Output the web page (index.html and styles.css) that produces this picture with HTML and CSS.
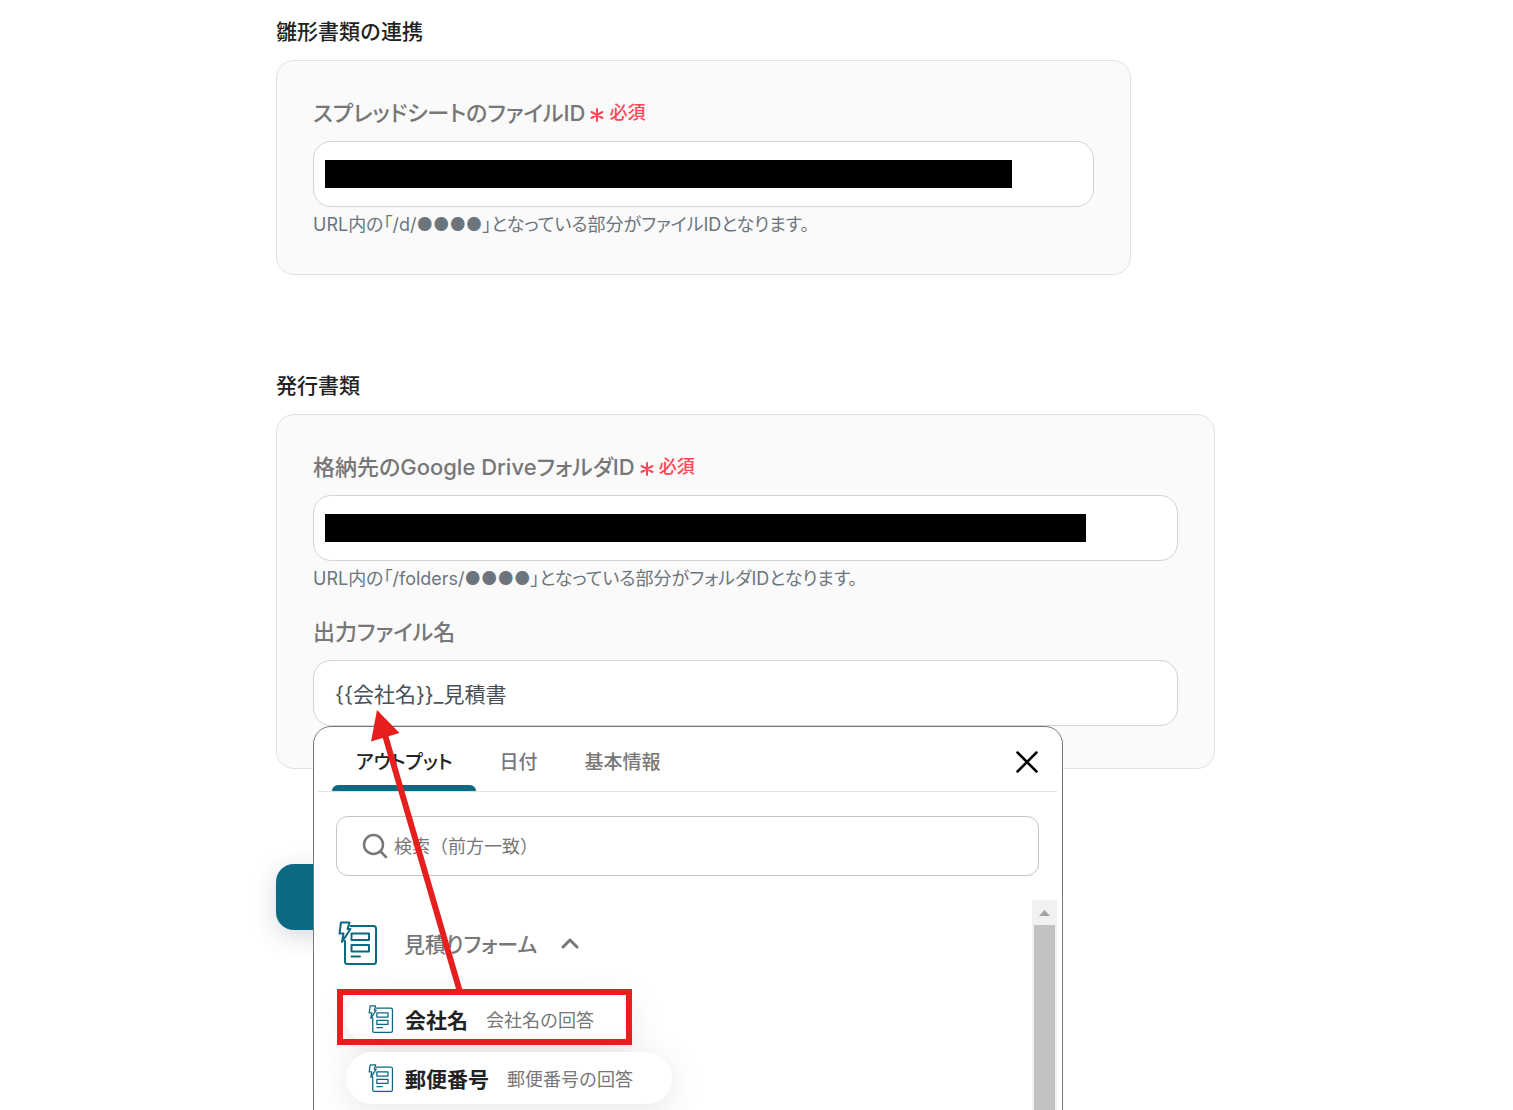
FILE: index.html
```html
<!DOCTYPE html>
<html lang="ja">
<head>
    <meta charset="UTF-8" />
    <meta name="viewport" content="width=device-width, initial-scale=1.0"/>
    <title>書類発行の設定</title>
    <link rel="stylesheet" href="styles.css">
</head>
<body>
    <!-- フォームアイコンの共通定義 -->
    <svg class="defs" aria-hidden="true">
        <symbol id="formIcon" viewBox="0 0 40 44">
            <path d="M12.500 5H35.500Q38 5 38 7.500V40.500Q38 43 35.500 43H9.500Q7 43 7 40.500V20" />
            <path d="M3 1.500H11.500L9.500 8H12.500L4 21L5.500 12.500H1.500Z" />
            <path d="M13.500 12.500H31V19H13.500ZM13.500 24H31V30.500H13.500ZM13.500 35.500H22" />
        </symbol>
    </svg>

    <form class="page" id="documentForm">
        <section class="section">
            <h2>雛形書類の連携</h2>
            <div class="card card-narrow">
                <div class="label-row">
                    <label for="sheetId">スプレッドシートのファイルID</label>
                    <span class="required"><svg viewBox="0 0 14 14"><path d="M7 1V13M1.500 4L12.500 10M1.500 10L12.500 4" /></svg>必須</span>
                </div>
                <div class="field">
                    <input type="text" id="sheetId" required>
                    <span class="mask"></span>
                </div>
                <p class="hint">URL内の「/d/●●●●」となっている部分がファイルIDとなります。</p>
            </div>
        </section>

        <section class="section">
            <h2>発行書類</h2>
            <div class="card card-tall">
                <div class="label-row">
                    <label for="folderId">格納先のGoogle DriveフォルダID</label>
                    <span class="required"><svg viewBox="0 0 14 14"><path d="M7 1V13M1.500 4L12.500 10M1.500 10L12.500 4" /></svg>必須</span>
                </div>
                <div class="field">
                    <input type="text" id="folderId" required>
                    <span class="mask"></span>
                </div>
                <p class="hint">URL内の「/folders/●●●●」となっている部分がフォルダIDとなります。</p>

                <div class="label-row label-next">
                    <label for="fileName">出力ファイル名</label>
                </div>
                <div class="field">
                    <input type="text" id="fileName" value="{{会社名}}_見積書">

                    <!-- 変数の選択メニュー -->
                    <div class="picker">
                        <div class="tabs">
                            <button type="button" class="tab active">アウトプット</button>
                            <button type="button" class="tab">日付</button>
                            <button type="button" class="tab">基本情報</button>
                            <button type="button" class="close" aria-label="閉じる">
                                <svg viewBox="0 0 24 24"><path d="M2.500 2.500L21.500 21.500M21.500 2.500L2.500 21.500" /></svg>
                            </button>
                        </div>
                        <div class="search">
                            <svg viewBox="0 0 26 26"><circle cx="11.500" cy="11.500" r="9.500" /><path d="M18.500 18.500L24 24" /></svg>
                            <input type="search" placeholder="検索（前方一致）" aria-label="検索">
                        </div>
                        <div class="results">
                            <div class="list">
                                <button type="button" class="group">
                                    <svg class="form-icon"><use href="#formIcon" /></svg>
                                    見積りフォーム
                                    <svg class="chevron" viewBox="0 0 18 12"><path d="M2 10L9 3L16 10" /></svg>
                                </button>
                                <button type="button" class="item">
                                    <svg class="form-icon"><use href="#formIcon" /></svg>
                                    <b>会社名</b><span>会社名の回答</span>
                                </button>
                                <button type="button" class="item">
                                    <svg class="form-icon"><use href="#formIcon" /></svg>
                                    <b>郵便番号</b><span>郵便番号の回答</span>
                                </button>
                            </div>
                            <div class="scrollbar">
                                <svg viewBox="0 0 25 25"><path d="M7 16L12.500 10L18 16Z" /></svg>
                                <div class="thumb"></div>
                            </div>
                        </div>
                    </div>

                    <!-- 説明用の矢印と赤枠 -->
                    <svg class="guide" viewBox="0 0 330 400" aria-hidden="true">
                        <path class="guide-line" d="M72 75L147 332" />
                        <path class="guide-head" d="M64 50L86.500 73L58 81.500Z" />
                        <rect class="guide-line" x="27" y="332" width="289" height="50" />
                    </svg>
                </div>
            </div>
        </section>

        <button type="submit" class="save" aria-label="保存"></button>
    </form>
</body>
</html>
```
FILE: styles.css
```css
* {
    box-sizing: border-box;
}
body {
    margin: 0;
    font-family: Inter, "Noto Sans CJK JP", sans-serif;
    font-size: 21px;
    color: #222;
    background-color: #fff;
}
button, input {
    font-family: inherit;
}
button {
    border: none;
    background: none;
    padding: 0;
    cursor: pointer;
}
svg {
    flex: none;
    fill: none;
    stroke-linecap: round;
    stroke-linejoin: round;
}
.defs {
    position: absolute;
    width: 0;
    height: 0;
}
.page {
    height: 100vh;
    overflow: hidden;
    padding: 16px 298px 0 276px;
}
.section {
    margin-bottom: 95px;
}
h2 {
    margin: 0 0 12px;
    font-size: 21px;
    line-height: 32px;
    font-weight: 500;
}
.card {
    padding: 36px 36px 31px;
    border: 1px solid #dee2e6;
    border-radius: 18px;
    background-color: #fafafa;
}
.card-narrow {
    max-width: 855px;
}
.card-tall {
    padding-bottom: 42px;
}
.label-row {
    display: flex;
    align-items: center;
    gap: 5px;
    margin-bottom: 12px;
    font-size: 22px;
    line-height: 32px;
    font-weight: 500;
    font-feature-settings: "palt";
    color: #777;
}
.label-next {
    margin-top: 19px;
}
.required {
    display: flex;
    align-items: center;
    gap: 5px;
    font-size: 18px;
    color: #ff4757;
}
.required svg {
    width: 14px;
    height: 14px;
    margin-top: 3px;
    stroke: #ff4757;
    stroke-width: 2;
}
.field {
    position: relative;
}
.field > input {
    display: block;
    width: 100%;
    height: 66px;
    padding: 0 21px;
    border: 1px solid #ced4da;
    border-radius: 18px;
    background-color: #fff;
    font-size: 21px;
    color: #495057;
    outline: none;
}
.mask {
    position: absolute;
    left: 12px;
    top: 19px;
    width: 88%;
    height: 28px;
    background-color: #000;
}
.hint {
    margin: 0;
    font-size: 18px;
    line-height: 36px;
    font-feature-settings: "palt";
    color: #6c757d;
}
.picker {
    position: absolute;
    top: 66px;
    left: 0;
    z-index: 1;
    width: 750px;
    height: 600px;
    padding: 0 5px 0 4px;
    border: 1px solid #777;
    border-radius: 18px;
    background-color: #fff;
}
.tabs {
    display: flex;
    height: 65px;
    padding: 0 18px 0 14px;
    border-bottom: 1px solid #dee2e6;
}
.tab {
    padding: 8px 23px 0 24px;
    border-bottom: 6px solid transparent;
    font-size: 19px;
    font-weight: 500;
    font-feature-settings: "palt";
    color: #777;
}
.tab.active {
    position: relative;
    color: #222;
}
.tab.active::after {
    content: "";
    position: absolute;
    left: 0;
    right: 0;
    bottom: -6px;
    height: 6px;
    border-radius: 6px 6px 0 0;
    background-color: #0b6982;
}
.close {
    margin-left: auto;
    padding-top: 8px;
}
.close svg {
    width: 24px;
    height: 24px;
    stroke: #000;
    stroke-width: 2.5;
}
.search {
    display: flex;
    align-items: center;
    gap: 6px;
    height: 60px;
    margin: 24px 18px;
    padding: 0 25px;
    border: 1px solid #c4c4c4;
    border-radius: 12px;
}
.search svg {
    width: 26px;
    height: 26px;
    stroke: #777;
    stroke-width: 2.5;
}
.search input {
    flex: 1;
    padding: 0;
    border: none;
    outline: none;
    font-size: 18px;
    background: none;
}
.search input::placeholder {
    color: #777;
}
.results {
    display: flex;
    height: 420px;
    overflow: hidden;
}
.list {
    flex: 1;
    display: flex;
    flex-direction: column;
    align-items: flex-start;
    gap: 7px;
    padding: 20px 0 0 20px;
}
.form-icon {
    width: 40px;
    height: 44px;
    stroke: #0b6982;
    stroke-width: 2;
}
.group {
    display: flex;
    align-items: center;
    height: 46px;
    margin-bottom: 20px;
    font-size: 21px;
    font-weight: 500;
    font-feature-settings: "palt";
    color: #777;
}
.group .form-icon {
    margin-right: 26px;
}
.chevron {
    width: 18px;
    height: 12px;
    margin-left: 24px;
    stroke: #777;
    stroke-width: 3;
}
.item {
    display: flex;
    align-items: center;
    height: 52px;
    margin-left: 8px;
    padding: 0 39px 0 22px;
    border-radius: 26px;
    background-color: #fff;
    box-shadow: 0 6px 36px rgba(0, 0, 0, 0.1);
    font-size: 21px;
    color: #222;
}
.item .form-icon {
    width: 26px;
    height: 28px;
    margin-right: 11px;
}
.item b {
    margin-right: 18px;
    font-weight: 600;
}
.item span {
    font-size: 18px;
    color: #777;
}
.scrollbar {
    width: 25px;
    background-color: #f1f1f1;
}
.scrollbar svg {
    display: block;
    width: 25px;
    height: 25px;
    fill: #a3a3a3;
}
.thumb {
    height: 300px;
    margin: 0 2px;
    background-color: #c1c1c1;
}
.guide {
    position: absolute;
    top: 0;
    left: 0;
    z-index: 2;
    width: 330px;
    height: 400px;
    pointer-events: none;
}
.guide-line {
    stroke: #e61e1e;
    stroke-width: 6;
    stroke-linecap: butt;
    stroke-linejoin: miter;
}
.guide-head {
    fill: #e61e1e;
}
.save {
    display: block;
    width: 260px;
    height: 66px;
    border-radius: 18px;
    background-color: #0b6982;
    box-shadow: 0 6px 24px rgba(40, 60, 80, 0.2);
}
```
